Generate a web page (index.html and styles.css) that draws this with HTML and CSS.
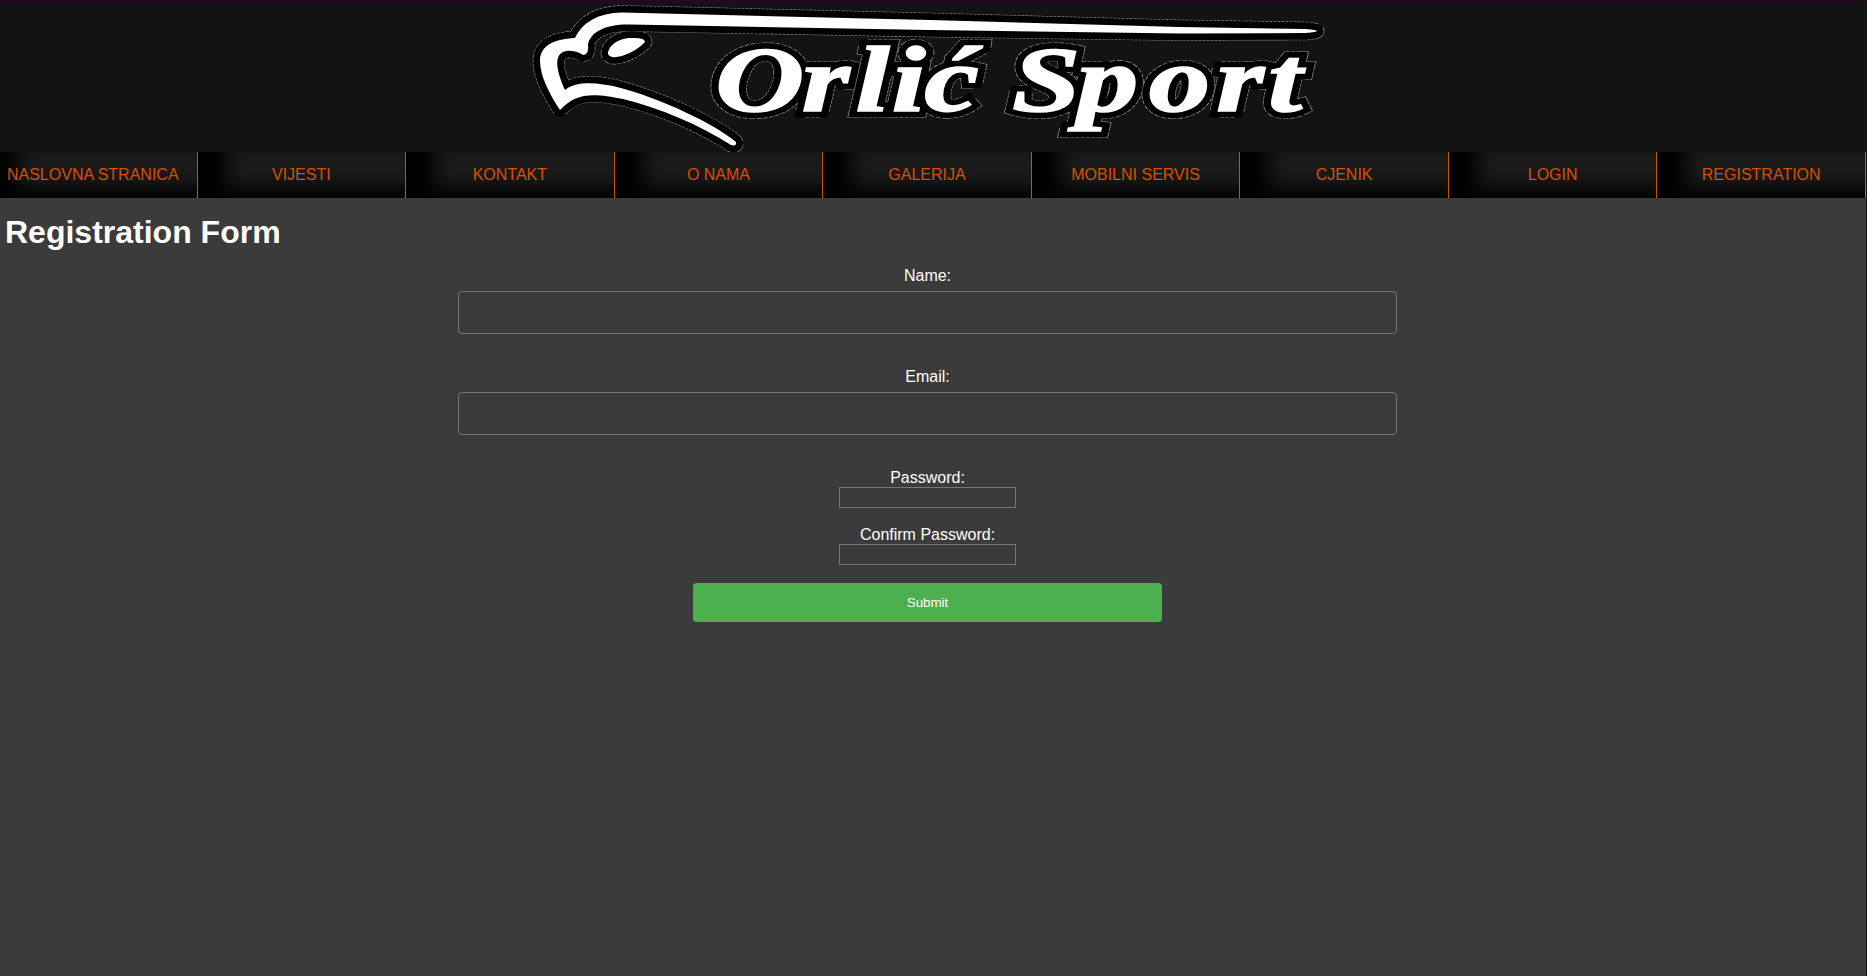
FILE: index.html
```html
<!DOCTYPE html>
<html lang="hr">
<head>
<meta charset="utf-8">
<title>Orlić Sport</title>
<link rel="stylesheet" href="styles.css">
</head>
<body>
<header class="banner">
<svg class="logo" width="800" height="152" viewBox="530 0 800 152" role="img" aria-label="Orlić Sport">
  <defs>
    <g id="cap">
      <path d="M560 110C550 95 540 76 540 61C540 46 553 39 575 38C583 22 598 13 622 12.500L930 20L1180 27L1306 29Q1328 31 1306 33L1180 33.500L930 30L630 24.500C605 24 591 32 588 44Q589 55 583 55Q575 50 566 51C553 54 556 70 565 90C577 80 600 83 617 87C660 98 715 124 736 142Q737 147 731 145C700 125 660 108 623 99C590 92 575 94 560 110Z"/>
      <path d="M608 54C608 45 620 37 634 38Q645 38 645 42Q637 51 622 56Q610 59 608 54Z"/>
    </g>
    <g id="word">
      <g transform="translate(0 110.5) scale(1.31 1)">
        <text class="logo-text" x="546 612 653 680.500 705.500" y="0">Orlić</text>
        <text class="logo-text" x="772.500 822 877 928.500 968" y="0">Sport</text>
      </g>
    </g>
  </defs>
  <use href="#cap" class="rim rim-cap"/>
  <use href="#cap" class="edge edge-cap"/>
  <use href="#word" class="rim rim-word"/>
  <use href="#word" class="edge edge-word"/>
  <use href="#cap" class="face"/>
  <use href="#word" class="face face-word"/>
</svg>
</header>
<nav class="menu">
  <a class="item">NASLOVNA STRANICA</a>
  <a class="item">VIJESTI</a>
  <a class="item">KONTAKT</a>
  <a class="item">O NAMA</a>
  <a class="item">GALERIJA</a>
  <a class="item">MOBILNI SERVIS</a>
  <a class="item">CJENIK</a>
  <a class="item">LOGIN</a>
  <a class="item">REGISTRATION</a>
</nav>
<main>
  <h1 class="title">Registration Form</h1>
  <form class="form">
    <label for="name">Name:</label>
    <input class="wide" id="name" type="text">
    <label for="email">Email:</label>
    <input class="wide" id="email" type="email">
    <label for="pw">Password:</label>
    <input class="small" id="pw" type="password">
    <label for="pw2">Confirm Password:</label>
    <input class="small" id="pw2" type="password">
    <button class="submit" type="button">Submit</button>
  </form>
</main>
</body>
</html>
```
FILE: styles.css
```css
* { box-sizing: border-box; }
html { background: #3b3b3b; }
body {
  margin: 0;
  height: 976px;
  overflow: hidden;
  border-right: 1px solid #141414;
  color: #fff;
  font: 16px/18px "Liberation Sans", Arial, sans-serif;
}
.banner {
  height: 152px;
  background: #131313;
  border-top: 2px solid #220b22;
  margin-right: -1px;
}
.logo { display: block; margin: -2px 0 0 530px; }
.logo-text {
  font: italic bold 94px "Liberation Serif", "Times New Roman", serif;
}
.rim { fill: none; stroke: #8a8a8a; stroke-linejoin: round; }
.edge { fill: #000; stroke: #000; stroke-linejoin: round; }
.rim-cap { stroke-width: 14.6; stroke-dasharray: 3 1; }
.edge-cap { fill: none; stroke-width: 13.4; }
#cap { fill-rule: evenodd; }
.rim-word { stroke-width: 14; stroke-dasharray: 3 1; }
.edge-word { stroke-width: 12.8; }
.rim-word, .edge-word { stroke-linejoin: miter; stroke-miterlimit: 3; }
.face { fill: #fff; }
.face-word { stroke: #fff; stroke-width: 1.6; }
.menu {
  display: grid;
  grid-template-columns: repeat(9, 1fr);
  height: 46px;
  margin-left: -11px;
}
.item {
  display: flex;
  align-items: center;
  justify-content: center;
  border-right: 1px solid #cb5200;
  background: #1b1b1b;
  box-shadow: inset 28px -10px 20px #000;
  color: #d94f00;
}
.title {
  margin: 14px 0 0 5px;
  font-size: 32px;
  line-height: 40px;
}
.form {
  display: flex;
  flex-direction: column;
  align-items: center;
  margin: 15px 11px 0 0;
}
input { background: transparent; border: 1px solid #767676; }
.wide { width: 939px; height: 43px; margin: 6px 0 34px; border-radius: 4px; }
.small { width: 177px; height: 21px; margin: 0 0 18px; }
.submit {
  width: 469px;
  height: 39px;
  border: 0;
  border-radius: 4px;
  background: #4caf50;
  color: #fff;
  font: 13.333px "Liberation Sans", Arial, sans-serif;
}
```
